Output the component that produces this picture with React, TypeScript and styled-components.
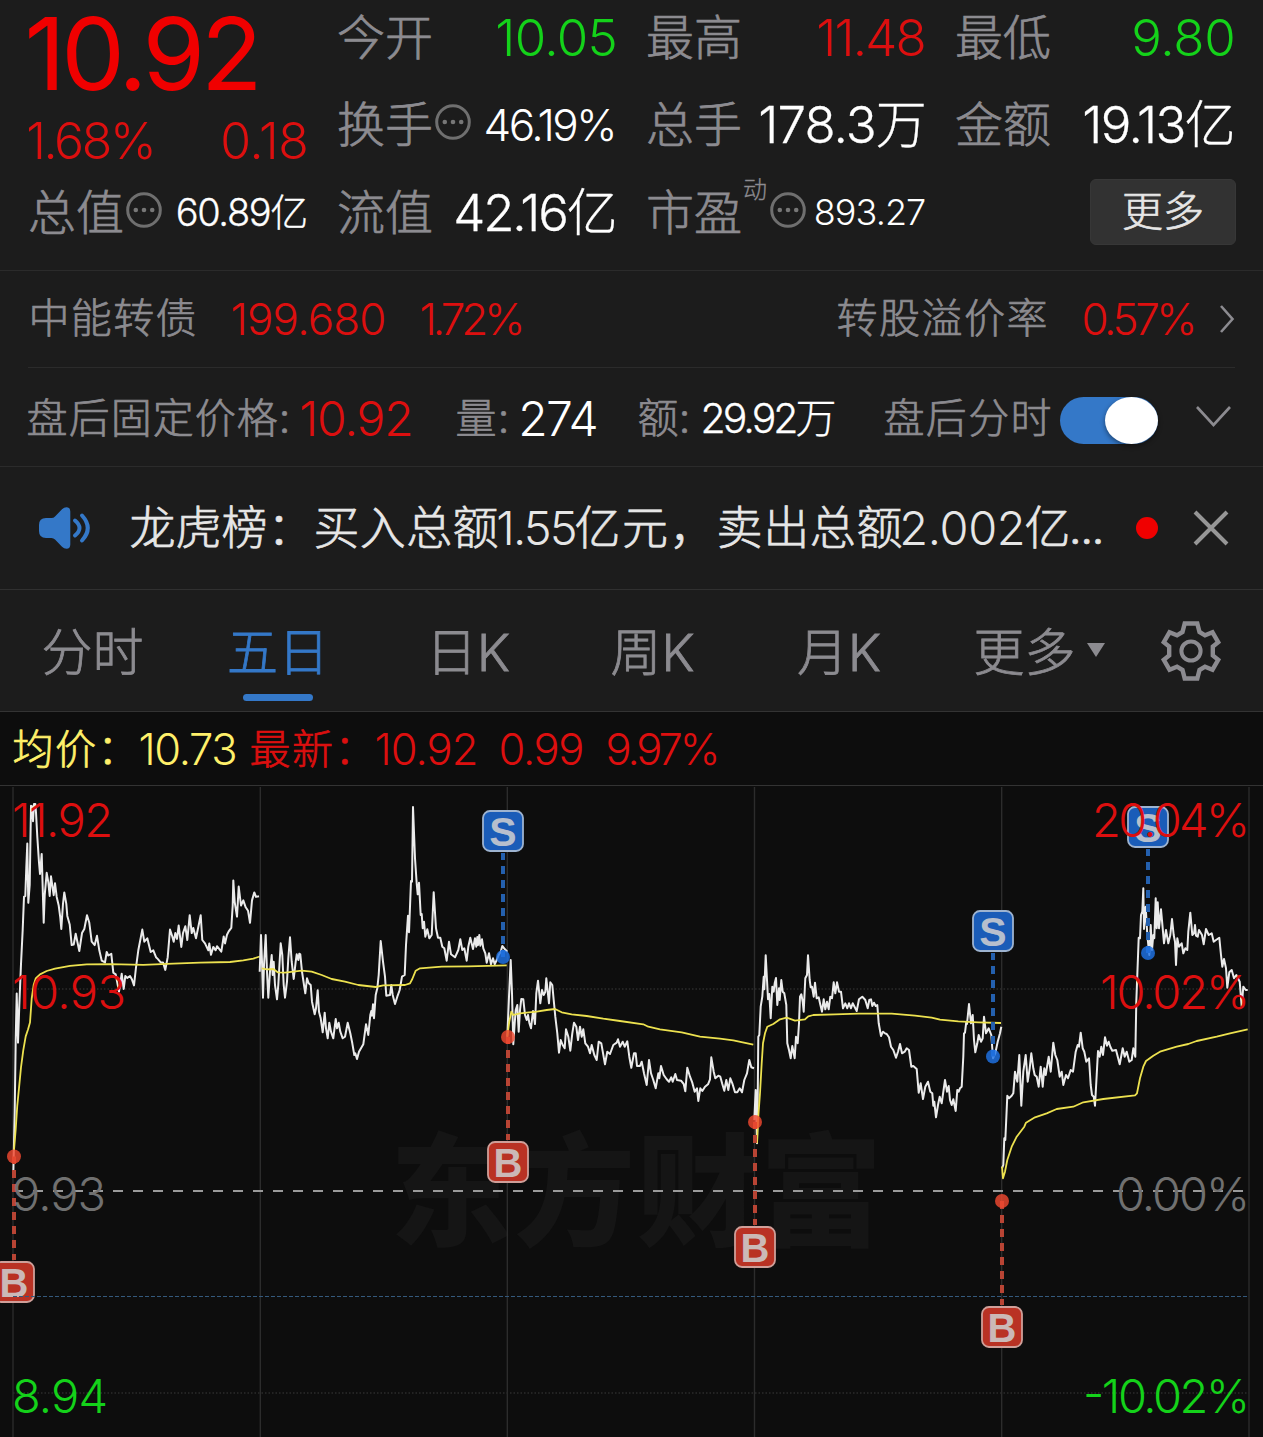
import React, { useLayoutEffect, useRef, useState } from "react";
import styled, { createGlobalStyle } from "styled-components";

const sans = `Inter, "Noto Sans CJK SC", sans-serif`;

const palette = {
  panel: "#1c1c1c",
  chart: "#0d0d0d",
  line: "#2b2b2b",
  label: "#8c8b90",
  red: "#dc0f0f",
  priceRed: "#f00000",
  green: "#14d21a",
  white: "#ffffff",
  soft: "#e6e6e6",
  blue: "#3478c8",
  yellow: "#fff06a",
};

const GlobalStyle = createGlobalStyle`
  * { box-sizing: border-box; }
  body { margin: 0; background: ${palette.chart}; }
`;

const Screen = styled.main`
  width: 1263px;
  height: 1437px;
  overflow: hidden;
  display: flex;
  flex-direction: column;
  background: ${palette.panel};
  font-family: ${sans};
  font-weight: 300;
  color: ${palette.label};
`;

/* ---------- text that fills a given width by adjusting its tracking ---------- */

const FitBox = styled.span<{ $w: number; $size: number; $color?: string; $weight?: number; $ml?: number; $stroke: number }>`
  display: block;
  flex: none;
  width: ${(p) => p.$w}px;
  margin-left: ${(p) => p.$ml ?? 0}px;
  font-size: ${(p) => p.$size}px;
  font-weight: ${(p) => p.$weight ?? 300};
  line-height: 1.2;
  color: ${(p) => p.$color ?? palette.label};
  -webkit-text-stroke: ${(p) => p.$stroke}px currentColor;
  white-space: pre;
`;

type FitProps = { text: string; w: number; size: number; color?: string; weight?: number; ml?: number };

/* Light Han glyphs are thinner than the light digits, so they get a hairline outline. */
const strokeFor = (text: string) => {
  const han = /[\u3400-\u9fff]/.test(text);
  if (!han) return 0;
  return /\d/.test(text) ? 0.3 : 0.7;
};

function Fit({ text, w, size, color, weight, ml }: FitProps) {
  const ref = useRef<HTMLSpanElement>(null);
  const [tracking, setTracking] = useState(0);
  useLayoutEffect(() => {
    const natural = ref.current!.getBoundingClientRect().width;
    const bearing = size * 0.07;
    if (text.length > 1) setTracking((w + bearing - natural) / (text.length - 1));
  }, [text, w, size]);
  return (
    <FitBox $w={w} $size={size} $color={color} $weight={weight} $ml={ml} $stroke={strokeFor(text)}>
      <span ref={ref} style={{ letterSpacing: tracking, marginLeft: -size * 0.035 }}>
        {text}
      </span>
    </FitBox>
  );
}

/* ---------- quote header ---------- */

const Quote = styled.section`
  flex: none;
  height: 271px;
  padding: 0 28px;
  display: grid;
  grid-template-columns: repeat(4, 279px);
  grid-template-rows: 75px 100px 76px;
  column-gap: 30px;
  border-bottom: 1px solid ${palette.line};
`;

const PriceCell = styled.div`
  grid-row: span 2;
  display: flex;
  flex-direction: column;
`;

const LastPrice = styled.div`
  height: 112px;
  display: flex;
  align-items: center;
  padding-bottom: 5px;
`;

const ChangeRow = styled.div`
  height: 57px;
  display: flex;
  align-items: center;
  justify-content: space-between;
`;

const Cell = styled.div`
  display: flex;
  align-items: center;
`;

const Label = styled.span`
  font-size: 48px;
  line-height: 1.2;
  white-space: nowrap;
  -webkit-text-stroke: 0.7px currentColor;
`;

const Spacer = styled.span`
  flex: 1;
`;

const Sup = styled.span`
  align-self: flex-start;
  margin: 1px 1px 0 1px;
  font-size: 24px;
  line-height: 1.2;
  -webkit-text-stroke: 0.3px currentColor;
`;

const MoreButton = styled.button`
  width: 146px;
  height: 66px;
  margin: -3px -2px 0 auto;
  border: 1px solid #373737;
  border-radius: 6px;
  background: #323232;
  color: ${palette.soft};
  font: 300 41px/1 ${sans};
  -webkit-text-stroke: 0.7px currentColor;
`;

const InfoIcon = styled.svg`
  flex: none;
  width: 36px;
  height: 36px;
  margin: -6px 0 0 2px;
`;

function Info() {
  return (
    <InfoIcon viewBox="0 0 36 36">
      <circle cx="18" cy="18" r="16.3" fill="none" stroke="#6f6f6f" strokeWidth="3" />
      <g fill="#777">
        <circle cx="9.8" cy="18" r="2.3" />
        <circle cx="18" cy="18" r="2.3" />
        <circle cx="26.2" cy="18" r="2.3" />
      </g>
    </InfoIcon>
  );
}

/* ---------- strips under the header ---------- */

const Strip = styled.section<{ $h: number; $drop?: number }>`
  flex: none;
  height: ${(p) => p.$h}px;
  padding: ${(p) => p.$drop ?? 0}px 28px 0;
  display: flex;
  align-items: center;
  border-bottom: 1px solid ${palette.line};
`;

const InsetStrip = styled(Strip)`
  margin: 0 28px;
  padding-left: 0;
  padding-right: 0;
`;

const NewsStrip = styled(Strip)`
  padding-left: 38px;
  border-color: #303030;
`;

const Toggle = styled.div`
  flex: none;
  width: 98px;
  height: 47px;
  margin: 3px 0 0 10px;
  border-radius: 24px;
  background: ${palette.blue};
  display: flex;
  justify-content: flex-end;
`;

const Knob = styled.div`
  width: 53px;
  height: 47px;
  border-radius: 50%;
  background: #fff;
  box-shadow: 0 2px 5px rgba(0, 0, 0, 0.45);
`;

const Glyph = styled.svg<{ $w: number; $h: number; $ml?: number; $mt?: number }>`
  flex: none;
  width: ${(p) => p.$w}px;
  height: ${(p) => p.$h}px;
  margin-left: ${(p) => p.$ml ?? 0}px;
  margin-top: ${(p) => p.$mt ?? 0}px;
  overflow: visible;
`;

const UnreadDot = styled.i`
  flex: none;
  width: 22px;
  height: 22px;
  margin-left: 33px;
  border-radius: 50%;
  background: #f00000;
`;

/* ---------- tabs ---------- */

const Tabs = styled.nav`
  flex: none;
  height: 122px;
  display: grid;
  grid-template-columns: 185px 186px 194px 175px 198px 202px 102px;
  border-bottom: 1px solid #333;
`;

const Tab = styled.div<{ $active?: boolean }>`
  padding-top: 32px;
  display: flex;
  flex-direction: column;
  align-items: center;
  color: ${(p) => (p.$active ? palette.blue : palette.label)};
  font-size: 51px;
  line-height: 61px;
  white-space: nowrap;
  -webkit-text-stroke: 0.8px currentColor;
  &::after {
    content: "";
    width: 70px;
    height: 7px;
    margin-top: 11px;
    border-radius: 4px;
    background: ${(p) => (p.$active ? palette.blue : "transparent")};
  }
`;

const MoreTab = styled(Tab)`
  flex-direction: row;
  align-items: flex-start;
  justify-content: center;
  gap: 11px;
  &::after { display: none; }
`;

const GearCell = styled.div`
  display: flex;
  align-items: center;
  justify-content: center;
`;

/* ---------- chart ---------- */

const Legend = styled.div`
  flex: none;
  height: 74px;
  padding: 2px 0 0 14px;
  display: flex;
  align-items: center;
  background: ${palette.chart};
  border-bottom: 1px solid #333;
`;

const ChartSvg = styled.svg`
  flex: none;
  display: block;
  width: 1263px;
  height: 651px;
  background: ${palette.chart};
`;

type Session = { x: number; y: number; ky: number; price: string; avg: string };

const sessions: Session[] = [
  {
    x: 0, y: 785, ky: 2.9037,
    price: "40,1130 44,950 47,740 50,605 54,748 58,640 63,520 68,420 72,325 76,322 79,240 82,170 85,342 89,290 93,60 96,62 99,105 102,55 106,55 108,80 112,150 117,225 120,258 125,200 128,300 131,400 134,320 140,255 145,282 149,322 153,265 161,320 165,285 170,325 176,350 181,385 184,418 189,345 193,312 199,345 202,380 209,405 215,465 221,463 227,432 238,482 246,430 253,418 261,378 268,400 275,455 284,465 291,438 298,480 305,510 315,515 320,485 325,495 334,490 340,545 347,550 357,600 365,548 371,592 376,555 382,560 390,555 396,565 402,582 408,530 415,480 427,420 433,455 442,445 452,485 460,480 468,500 473,505 482,515 489,515 496,537 503,500 510,420 517,440 521,455 526,430 531,447 536,408 544,470 549,430 556,410 562,450 569,378 575,430 580,415 588,445 602,378 607,450 615,460 621,472 625,480 628,460 633,493 640,470 647,480 651,468 664,484 671,440 675,460 681,435 686,425 694,415 698,350 700,277 704,340 711,382 716,295 723,350 730,335 737,355 744,365 750,400 756,335 763,312 768,325 777,323",
    avg: "42,1060 47,1000 52,930 57,880 63,820 70,770 77,730 84,710 90,690 95,620 101,580 107,562 120,550 140,540 165,533 210,525 260,521 330,520 430,522 520,519 600,516 690,514 730,509 760,504 779,498",
  },
  {
    x: 255, y: 785, ky: 3,
    price: "14,560 18,450 21,530 24,638 27,540 32,450 36,560 40,638 45,560 50,510 53,570 56,530 60,600 66,643 70,600 77,475 82,510 86,600 90,638 96,590 100,520 105,457 110,530 116,582 122,530 125,508 130,525 133,506 136,508 141,560 147,600 151,625 156,580 161,595 167,600 171,650 179,688 183,670 188,616 192,680 197,700 203,742 209,683 213,730 218,760 223,713 228,740 235,760 242,702 246,730 251,713 256,740 263,760 270,755 278,713 286,745 292,775 298,810 301,805 306,822 312,800 325,778 333,718 340,750 346,690 349,678 351,692 354,658 357,700 362,630 367,610 371,570 377,468 384,530 390,575 394,632 405,630 409,600 413,630 420,657 427,635 434,615 441,575 449,570 453,480 459,392 462,442 468,288 471,290 474,66 480,220 485,295 488,328 492,293 497,390 500,387 503,430 507,410 511,455 517,433 523,460 530,450 536,322 543,430 549,458 556,458 562,485 568,490 575,527 582,470 588,508 600,517 610,495 616,463 622,495 628,490 635,527 640,485 646,458 654,492 660,460 664,485 667,456 669,480 673,450 676,482 681,463 685,490 691,505 695,533 702,505 708,538 714,520 719,538 725,525 731,510 737,500 742,483 750,493 757,500",
    avg: "20,550 35,553 55,552 68,562 90,563 140,557 170,560 200,570 230,582 270,590 310,600 362,606 385,601 450,600 465,595 472,582 482,557 495,550 560,545 640,544 755,541",
  },
  {
    x: 500, y: 930, ky: 3,
    price: "22,320 27,200 32,90 36,190 40,343 44,280 47,240 52,225 56,305 60,240 64,207 70,208 75,255 80,270 84,255 88,278 93,295 99,243 105,282 109,190 114,152 121,220 126,180 131,195 136,185 139,145 147,220 151,157 157,165 161,210 166,260 172,310 177,368 182,330 188,345 194,355 198,298 205,320 211,362 217,310 222,278 229,290 234,330 240,290 245,320 250,298 256,340 264,350 270,370 275,345 283,375 290,390 296,335 304,340 315,403 322,365 330,372 340,345 350,338 354,328 360,350 368,335 374,350 382,334 388,380 394,413 402,370 407,370 411,408 420,408 425,395 432,430 440,465 447,390 453,430 460,450 467,475 475,430 478,445 483,408 491,435 500,448 507,455 514,442 518,455 526,432 531,450 543,452 551,462 556,484 562,413 570,440 577,458 584,485 591,475 595,513 601,475 607,483 615,470 624,463 630,448 634,382 641,425 646,445 655,437 661,440 667,462 673,482 679,450 685,480 691,445 697,460 705,487 712,487 719,475 726,487 733,450 741,430 748,390 754,412 762,415",
    avg: "22,320 28,275 34,245 40,255 60,250 80,248 110,245 140,240 165,237 185,247 215,253 260,258 310,266 360,273 430,283 445,290 480,298 545,307 600,320 660,326 700,331 760,344",
  },
  {
    x: 745, y: 900, ky: 3,
    price: "28,660 32,570 36,730 38,600 40,410 43,405 47,320 52,290 56,230 58,268 62,166 66,240 69,298 73,282 77,355 82,260 86,275 89,250 93,234 97,315 102,265 104,300 109,240 113,275 118,280 124,315 127,430 132,450 137,475 142,438 149,475 153,410 158,430 162,370 165,290 169,283 173,305 176,335 181,235 186,225 189,166 194,240 197,262 201,260 206,290 210,248 215,295 221,292 225,310 231,335 236,298 241,328 246,305 251,328 256,290 261,295 266,247 271,280 276,247 282,275 288,275 294,325 301,310 307,325 312,310 318,325 323,310 335,333 342,298 352,290 361,300 368,325 373,300 378,298 382,318 387,308 392,318 397,315 401,370 408,408 414,395 420,400 425,402 432,412 438,440 445,450 453,473 459,455 465,432 471,460 479,455 485,445 492,450 499,500 505,498 515,507 521,578 527,550 534,597 541,560 549,545 556,575 562,580 565,617 568,605 573,652 579,615 584,590 590,610 600,540 606,575 611,558 615,600 620,615 625,598 632,633 637,570 641,575 645,565 650,560 655,470 657,400 660,398 664,365 666,372 672,312 678,370 683,345 687,420 691,457 697,430 701,405 708,425 713,415 717,350 723,400 731,385 739,405 744,475 751,460 758,425 765,400 769,380",
    avg: "36,730 40,650 45,580 50,490 54,430 60,400 67,380 85,372 105,358 125,353 150,362 180,358 190,349 205,345 270,343 340,341 440,341 510,347 560,353 585,359 640,364 700,367 768,369",
  },
  {
    x: 990, y: 785, ky: 3,
    price: "36,1150 40,1140 43,1060 46,1065 49,1000 52,932 57,940 65,932 70,925 75,860 82,890 88,810 94,962 100,860 107,810 113,890 119,850 124,805 130,850 134,870 140,875 146,905 152,845 158,905 163,850 167,870 176,815 182,860 190,773 196,810 202,825 209,875 215,860 220,900 228,870 234,880 242,855 249,860 257,800 263,780 267,785 272,743 278,790 283,800 289,830 297,820 302,900 306,930 311,935 315,962 320,870 324,798 329,815 334,785 339,810 345,757 351,782 356,770 361,785 367,797 378,795 389,838 398,790 404,815 410,800 418,830 425,825 430,790 436,815 439,650 446,458 450,460 453,390 457,380 460,310 462,432 467,365 472,450 478,510 482,420 486,495 490,450 493,460 497,340 500,430 503,352 507,430 513,373 518,430 522,475 528,435 535,475 541,450 546,402 551,450 555,470 558,540 562,460 567,485 575,475 580,505 586,490 592,495 595,440 601,383 607,450 612,445 615,420 618,452 623,455 627,435 636,450 641,478 648,432 656,450 665,445 671,470 678,465 688,458 693,510 697,545 702,522 708,550 712,608 718,562 725,555 732,580 739,570 749,590 755,665 760,605 767,615 773,615",
    avg: "36,1145 39,1180 45,1160 52,1125 65,1085 80,1055 103,1025 108,1013 135,997 170,985 200,972 250,965 280,952 340,942 435,931 441,925 450,880 460,845 468,828 490,812 510,800 560,785 595,777 620,768 680,755 720,745 773,733",
  },
];

const toPoints = (s: Session, series: string) =>
  series
    .split(" ")
    .map((pair) => {
      const [px, py] = pair.split(",").map(Number);
      return `${(s.x + px / 3).toFixed(1)},${(s.y + py / s.ky).toFixed(1)}`;
    })
    .join(" ");

type Trade = { side: "B" | "S"; x: number; dot: number; box: number };

const trades: Trade[] = [
  { side: "B", x: 14, dot: 1156.5, box: 1282 },
  { side: "S", x: 503, dot: 957, box: 831 },
  { side: "B", x: 508, dot: 1037, box: 1162 },
  { side: "B", x: 755, dot: 1122, box: 1247 },
  { side: "S", x: 993, dot: 1056.5, box: 931 },
  { side: "B", x: 1002, dot: 1201, box: 1327 },
  { side: "S", x: 1148, dot: 953, box: 827 },
];

function TradeMark({ side, x, dot, box }: Trade) {
  const sell = side === "S";
  const edge = sell ? box + 22 : box - 22;
  return (
    <g>
      <line x1={x} x2={x} y1={edge} y2={dot} stroke={sell ? "#2460ae" : "#b84434"} strokeWidth="4" strokeDasharray="8 6" strokeDashoffset={sell ? 1 : 2} />
      <circle cx={x} cy={dot} r="7" fill={sell ? "#1e73e6" : "#f04830"} fillOpacity="0.82" />
      <rect x={x - 20} y={box - 20} width="40" height="40" rx="7" fill={sell ? "#1a5cb8" : "#b93224"} stroke={sell ? "#9db3d0" : "#cf9f99"} strokeWidth="1.8" />
      <text x={x} y={box + 15} textAnchor="middle" fontFamily='"Liberation Sans", sans-serif' fontWeight="700" fontSize={sell ? 41 : 40} fill={sell ? "#b6bfcd" : "#cbb9b7"}>
        {side}
      </text>
    </g>
  );
}

const axis = [
  { text: "11.92", x: 14, w: 97, y: 837, color: "#dc0f0f" },
  { text: "10.93", x: 14, w: 110, y: 1009, color: "#dc0f0f" },
  { text: "9.93", x: 14, w: 90, y: 1211, color: "#707070" },
  { text: "8.94", x: 14, w: 92, y: 1413, color: "#14d21a" },
  { text: "20.04%", x: 1094, w: 154, y: 837, color: "#dc0f0f" },
  { text: "10.02%", x: 1102, w: 146, y: 1009, color: "#dc0f0f" },
  { text: "0.00%", x: 1118, w: 130, y: 1211, color: "#707070" },
  { text: "-10.02%", x: 1085, w: 163, y: 1413, color: "#14d21a" },
];

function FiveDayChart() {
  return (
    <ChartSvg viewBox="0 786 1263 651">
      <text x="390" y="1236" textLength="492" fontFamily='"Noto Sans CJK SC", sans-serif' fontWeight="900" fontSize="122" fill="#151515">
        东方财富
      </text>
      <g stroke="#2c2c2c" strokeWidth="1.4">
        {[13, 260.3, 507.3, 754.5, 1001.7, 1249].map((x) => (
          <line key={x} x1={x} x2={x} y1="787" y2="1437" />
        ))}
      </g>
      <g stroke="#2b2b2b" strokeWidth="1.4" strokeDasharray="1.5 2">
        <line x1="13" x2="1249" y1="989" y2="989" />
        <line x1="13" x2="1249" y1="1393" y2="1393" />
      </g>
      <line x1="13" x2="1249" y1="1191" y2="1191" stroke="#9a9a9a" strokeWidth="1.8" strokeDasharray="10 10" />
      {sessions.map((s) => (
        <g key={s.x} fill="none" strokeLinejoin="round">
          <polyline points={toPoints(s, s.price)} stroke="#ebebeb" strokeWidth="2" />
          <polyline points={toPoints(s, s.avg)} stroke="#ece14f" strokeWidth="1.8" />
        </g>
      ))}
      {trades.map((t) => (
        <TradeMark key={t.x} {...t} />
      ))}
      <line x1="13" x2="1249" y1="1296.5" y2="1296.5" stroke="#34597c" strokeWidth="1.2" strokeDasharray="4 2" />
      <g fontFamily={sans} fontWeight="300" fontSize="47">
        {axis.map((a) => (
          <text key={a.text} x={a.x - 2} y={a.y} textLength={a.w + 4} fill={a.color}>
            {a.text}
          </text>
        ))}
      </g>
    </ChartSvg>
  );
}

export default function App() {
  return (
    <Screen>
      <GlobalStyle />
      <Quote>
        <PriceCell>
          <LastPrice>
            <Fit text="10.92" w={231} size={101} color={palette.priceRed} weight={410} />
          </LastPrice>
          <ChangeRow>
            <Fit text="1.68%" w={127} size={50} color={palette.red} />
            <Fit text="0.18" w={85} size={50} color={palette.red} />
          </ChangeRow>
        </PriceCell>
        <Cell>
          <Label>今开</Label>
          <Spacer />
          <Fit text="10.05" w={119} size={51} color={palette.green} />
        </Cell>
        <Cell>
          <Label>最高</Label>
          <Spacer />
          <Fit text="11.48" w={107} size={51} color={palette.red} />
        </Cell>
        <Cell>
          <Label>最低</Label>
          <Spacer />
          <Fit text="9.80" w={101} size={51} color={palette.green} />
        </Cell>
        <Cell>
          <Label>换手</Label>
          <Info />
          <Spacer />
          <Fit text="46.19%" w={131} size={44} color={palette.white} />
        </Cell>
        <Cell>
          <Label>总手</Label>
          <Spacer />
          <Fit text="178.3万" w={165} size={51} color={palette.white} />
        </Cell>
        <Cell>
          <Label>金额</Label>
          <Spacer />
          <Fit text="19.13亿" w={150} size={51} color={palette.white} />
        </Cell>
        <Cell>
          <Label>总值</Label>
          <Info />
          <Spacer />
          <Fit text="60.89亿" w={130} size={38} color={palette.white} />
        </Cell>
        <Cell>
          <Label>流值</Label>
          <Spacer />
          <Fit text="42.16亿" w={161} size={51} color={palette.white} />
        </Cell>
        <Cell>
          <Label>市盈</Label>
          <Sup>动</Sup>
          <Info />
          <Spacer />
          <Fit text="893.27" w={110} size={36} color={palette.white} />
        </Cell>
        <Cell>
          <MoreButton>更多</MoreButton>
        </Cell>
      </Quote>

      <InsetStrip $h={97}>
        <Fit text="中能转债" w={165} size={41} ml={2} />
        <Fit text="199.680" w={153} size={44} color={palette.red} ml={37} />
        <Fit text="1.72%" w={103} size={44} color={palette.red} ml={36} />
        <Spacer />
        <Fit text="转股溢价率" w={208} size={41} />
        <Fit text="0.57%" w={113} size={44} color={palette.red} ml={37} />
        <Glyph $w={14} $h={26} $ml={25} viewBox="0 0 14 26">
          <path d="M0 0 11.5 13 0 26" fill="none" stroke="#8c8b90" strokeWidth="2.6" />
        </Glyph>
      </InsetStrip>

      <Strip $h={99} $drop={3}>
        <Fit text="盘后固定价格:" w={261} size={41} />
        <Fit text="10.92" w={111} size={48} color={palette.red} ml={12} />
        <Fit text="量:" w={51} size={41} ml={45} />
        <Fit text="274" w={77} size={48} color={palette.white} ml={12} />
        <Fit text="额:" w={50} size={41} ml={42} />
        <Fit text="29.92万" w={133} size={41} color={palette.white} ml={13} />
        <Fit text="盘后分时" w={165} size={41} ml={50} />
        <Toggle>
          <Knob />
        </Toggle>
        <Glyph $w={33} $h={19} $ml={39} $mt={-5} viewBox="0 0 33 19">
          <path d="M0 0 16.5 18 33 0" fill="none" stroke="#8c8b90" strokeWidth="2.6" />
        </Glyph>
      </Strip>

      <NewsStrip $h={123}>
        <Glyph $w={52} $h={42} viewBox="0 0 52 42">
          <path d="M8 11H13.500Q15.500 11 17 9.500L24 2.200Q26 .3 28.500 .3Q32.300 .3 32.300 4.500V37.500Q32.300 41.700 28.500 41.700Q26 41.700 24 39.800L17 32.500Q15.500 31 13.500 31H8Q1 31 1 24V18Q1 11 8 11Z" fill="#3478c8" />
          <path d="M37 13.500Q46 21 37 28.500M44 8.500Q55.500 21 44 33.500" fill="none" stroke="#3478c8" strokeWidth="4" strokeLinecap="round" />
        </Glyph>
        <Fit text="龙虎榜：" w={181} size={46} color={palette.soft} ml={41} />
        <Fit text="买入总额" w={182} size={46} color={palette.soft} ml={3} />
        <Fit text="1.55" w={78} size={47} color={palette.soft} ml={1} />
        <Fit text="亿元，" w={138} size={46} color={palette.soft} />
        <Fit text="卖出总额" w={183} size={46} color={palette.soft} ml={4} />
        <Fit text="2.002" w={123} size={47} color={palette.soft} />
        <Fit text="亿..." w={77} size={46} color={palette.soft} ml={2} />
        <UnreadDot />
        <Glyph $w={32} $h={32} $ml={37} viewBox="0 0 32 32">
          <path d="M0 0 32 32M32 0 0 32" stroke="#969696" strokeWidth="4" />
        </Glyph>
      </NewsStrip>

      <Tabs>
        <Tab>分时</Tab>
        <Tab $active>五日</Tab>
        <Tab>日K</Tab>
        <Tab>周K</Tab>
        <Tab>月K</Tab>
        <MoreTab>
          更多
          <Glyph $w={18} $h={14} $mt={21} viewBox="0 0 18 14">
            <path d="M0 0H18L9 14Z" fill="#8c8b90" />
          </Glyph>
        </MoreTab>
        <GearCell>
          <Glyph $w={60} $h={60} viewBox="-30 -30 60 60">
            <path
              d="M-6.300 -27.500H6.300L8.500 -19L14 -15.700L21.500 -18.700L27.200 -8.800L21.800 -4.500V4.500L27.200 8.800L21.500 18.700L14 15.700L8.500 19L6.300 27.500H-6.300L-8.500 19L-14 15.700L-21.500 18.700L-27.200 8.800L-21.800 4.500V-4.500L-27.200 -8.800L-21.500 -18.700L-14 -15.700L-8.500 -19Z"
              fill="none"
              stroke="#8c8b90"
              strokeWidth="4.400"
            />
            <circle r="9.600" fill="none" stroke="#8c8b90" strokeWidth="4" />
          </Glyph>
        </GearCell>
      </Tabs>

      <Legend>
        <Fit text="均价：" w={123} size={41} color={palette.yellow} />
        <Fit text="10.73" w={96} size={43.5} color={palette.yellow} ml={3} />
        <Fit text="最新：" w={123} size={41} color={palette.red} ml={15} />
        <Fit text="10.92" w={101} size={43.5} color={palette.red} ml={2} />
        <Fit text="0.99" w={83} size={43.5} color={palette.red} ml={23} />
        <Fit text="9.97%" w={112} size={43.5} color={palette.red} ml={24} />
      </Legend>
      <FiveDayChart />
    </Screen>
  );
}
